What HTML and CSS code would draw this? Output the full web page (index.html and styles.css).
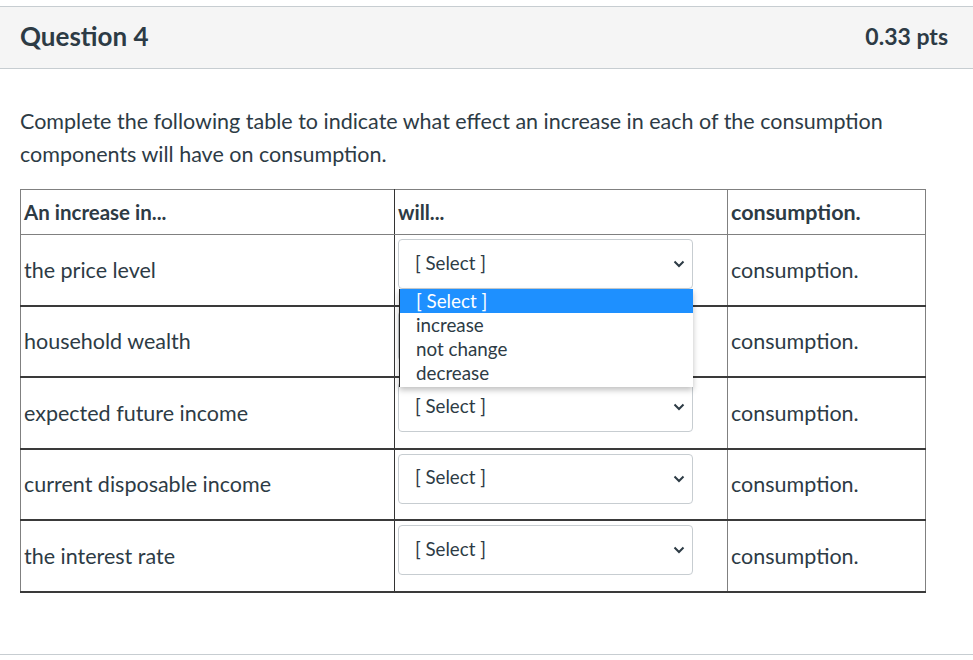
FILE: index.html
```html
<!DOCTYPE html>
<html lang="en">
<head>
    <meta charset="UTF-8">
    <meta name="viewport" content="width=device-width, initial-scale=1.0">
    <title>Question 4</title>
    <link rel="stylesheet" href="styles.css">
</head>
<body>
    <div class="question">
        <div class="question-header">
            <span class="question-name">Question 4</span>
            <span class="question-points">0.33 pts</span>
        </div>

        <div class="question-text">
            <p>Complete the following table to indicate what effect an increase in each of the consumption components will have on consumption.</p>

            <table class="answer-table">
                <thead>
                    <tr>
                        <th class="col-cause">An increase in...</th>
                        <th class="col-effect">will...</th>
                        <th class="col-result">consumption.</th>
                    </tr>
                </thead>
                <tbody>
                    <tr>
                        <td>the price level</td>
                        <td class="select-cell">
                            <div class="select-box">
                                <span>[ Select ]</span>
                                <svg class="chevron" width="12" height="8" viewBox="0 0 12 8"><path d="M1.5 1.5 L6 6 L10.5 1.5" fill="none" stroke="#2d3b45" stroke-width="2"/></svg>
                            </div>
                            <!-- open option list -->
                            <ul class="select-menu">
                                <li class="selected">[ Select ]</li>
                                <li>increase</li>
                                <li>not change</li>
                                <li>decrease</li>
                            </ul>
                        </td>
                        <td>consumption.</td>
                    </tr>
                    <tr>
                        <td>household wealth</td>
                        <td class="select-cell">
                            <div class="select-box">
                                <span>[ Select ]</span>
                                <svg class="chevron" width="12" height="8" viewBox="0 0 12 8"><path d="M1.5 1.5 L6 6 L10.5 1.5" fill="none" stroke="#2d3b45" stroke-width="2"/></svg>
                            </div>
                        </td>
                        <td>consumption.</td>
                    </tr>
                    <tr>
                        <td>expected future income</td>
                        <td class="select-cell">
                            <div class="select-box">
                                <span>[ Select ]</span>
                                <svg class="chevron" width="12" height="8" viewBox="0 0 12 8"><path d="M1.5 1.5 L6 6 L10.5 1.5" fill="none" stroke="#2d3b45" stroke-width="2"/></svg>
                            </div>
                        </td>
                        <td>consumption.</td>
                    </tr>
                    <tr>
                        <td>current disposable income</td>
                        <td class="select-cell">
                            <div class="select-box">
                                <span>[ Select ]</span>
                                <svg class="chevron" width="12" height="8" viewBox="0 0 12 8"><path d="M1.5 1.5 L6 6 L10.5 1.5" fill="none" stroke="#2d3b45" stroke-width="2"/></svg>
                            </div>
                        </td>
                        <td>consumption.</td>
                    </tr>
                    <tr>
                        <td>the interest rate</td>
                        <td class="select-cell">
                            <div class="select-box">
                                <span>[ Select ]</span>
                                <svg class="chevron" width="12" height="8" viewBox="0 0 12 8"><path d="M1.5 1.5 L6 6 L10.5 1.5" fill="none" stroke="#2d3b45" stroke-width="2"/></svg>
                            </div>
                        </td>
                        <td>consumption.</td>
                    </tr>
                </tbody>
            </table>
        </div>
    </div>
</body>
</html>
```

FILE: styles.css
```css
/* General Styles */
body {
    font-family: 'Lato', 'Open Sans', sans-serif;
    margin: 0;
    padding: 0;
    background: #fff;
    color: #2d3b45;
}

.question {
    margin: 6px -1px 0;
    border-top: 1px solid #c7cdd1;
    border-bottom: 1px solid #c7cdd1;
}

.question-header {
    display: flex;
    justify-content: space-between;
    align-items: center;
    box-sizing: border-box;
    height: 62px;
    padding: 0 26px 4px 21px;
    background: #f5f5f5;
    border-bottom: 1px solid #c7cdd1;
}

.question-name {
    font-size: 26px;
    font-weight: bold;
}

.question-points {
    font-size: 23px;
    font-weight: bold;
}

.question-text {
    padding: 36px 21px 61px;
    font-size: 21.5px;
}

.question-text p {
    margin: 0 0 18px;
    line-height: 33px;
}

/* Table */
.answer-table {
    width: 906px;
    border-collapse: collapse;
    font-size: 21.5px;
}

.answer-table th,
.answer-table td {
    border: 1px solid #808080;
    padding: 3px 3px;
    text-align: left;
    vertical-align: middle;
}

.answer-table th {
    height: 38px;
    font-weight: bold;
    font-size: 20.5px;
}

.answer-table th.col-result {
    font-size: 21.5px;
}

.answer-table tbody td {
    height: 63.5px;
    border-bottom: 2px solid #3a3a3a;
}

.answer-table th:first-child,
.answer-table td:first-child {
    border-right: 1px solid #333;
}

.col-cause {
    width: 367px;
}

.col-effect {
    width: 326px;
}

/* Select */
.select-cell {
    position: relative;
    vertical-align: top !important;
}

.select-box {
    display: flex;
    justify-content: space-between;
    align-items: center;
    box-sizing: border-box;
    width: 295px;
    height: 50px;
    margin-top: 1px;
    padding: 0 7px 3px 16px;
    border: 1px solid #c7cdd1;
    border-radius: 4px;
    background: #fff;
    font-size: 18.7px;
}

.chevron {
    margin-top: 3px;
}

.select-menu {
    position: absolute;
    top: 54px;
    left: 4px;
    z-index: 2;
    width: 293px;
    margin: 0;
    padding: 0 0 2px;
    list-style: none;
    background: #fff;
    border-left: 1px solid #222;
    box-shadow: 0 3px 6px rgba(0, 0, 0, 0.25);
    font-size: 18.8px;
}

.select-menu li {
    height: 24px;
    line-height: 24px;
    padding-left: 16px;
}

.select-menu li.selected {
    background: #1e90ff;
    color: #fff;
}
```
